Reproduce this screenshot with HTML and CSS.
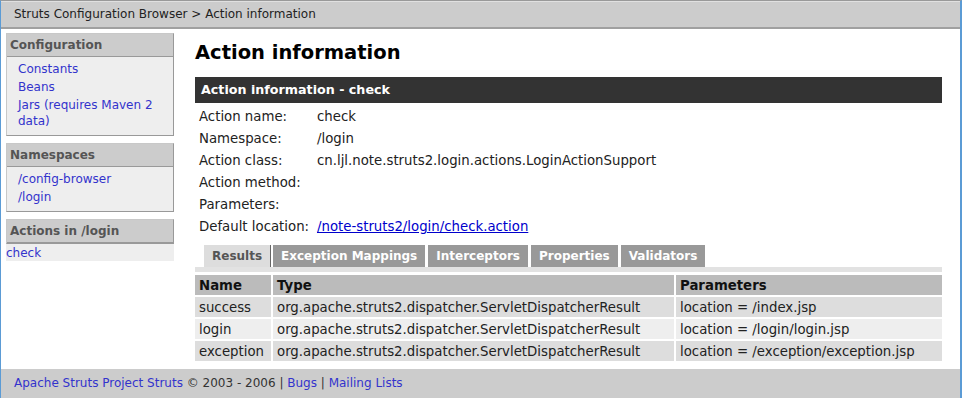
FILE: index.html
```html
<!DOCTYPE html>
<html lang="en">
<head>
    <meta charset="UTF-8">
    <title>Action information</title>
    <link rel="stylesheet" href="styles.css">
</head>
<body>
    <div class="page">
        <div class="header">Struts Configuration Browser &gt; Action information</div>

        <div class="layout">
            <div class="sidebar">
                <div class="nav-box">
                    <div class="nav-title">Configuration</div>
                    <ul class="nav-list">
                        <li><a href="#">Constants</a></li>
                        <li><a href="#">Beans</a></li>
                        <li><a href="#">Jars (requires Maven 2 data)</a></li>
                    </ul>
                </div>
                <div class="nav-box">
                    <div class="nav-title">Namespaces</div>
                    <ul class="nav-list">
                        <li><a href="#">/config-browser</a></li>
                        <li><a href="#">/login</a></li>
                    </ul>
                </div>
                <div class="nav-box actions">
                    <div class="nav-title">Actions in /login</div>
                </div>
                <div class="action-item"><a href="#">check</a></div>
            </div>

            <div class="main">
                <h1>Action information</h1>
                <div class="section-bar">Action information - check</div>
                <table class="info">
                    <tr><td class="label">Action name:</td><td>check</td></tr>
                    <tr><td class="label">Namespace:</td><td>/login</td></tr>
                    <tr><td class="label">Action class:</td><td>cn.ljl.note.struts2.login.actions.LoginActionSupport</td></tr>
                    <tr><td class="label">Action method:</td><td></td></tr>
                    <tr><td class="label">Parameters:</td><td></td></tr>
                    <tr><td class="label">Default location:</td><td><a class="plain-link" href="#">/note-struts2/login/check.action</a></td></tr>
                </table>

                <div class="tabs">
                    <span class="tab active">Results</span>
                    <span class="tab">Exception Mappings</span>
                    <span class="tab">Interceptors</span>
                    <span class="tab">Properties</span>
                    <span class="tab">Validators</span>
                </div>
                <div class="tab-panel">
                    <table class="results">
                        <tr><th class="col-name">Name</th><th class="col-type">Type</th><th>Parameters</th></tr>
                        <tr class="odd"><td>success</td><td>org.apache.struts2.dispatcher.ServletDispatcherResult</td><td>location = /index.jsp</td></tr>
                        <tr class="even"><td>login</td><td>org.apache.struts2.dispatcher.ServletDispatcherResult</td><td>location = /login/login.jsp</td></tr>
                        <tr class="odd"><td>exception</td><td>org.apache.struts2.dispatcher.ServletDispatcherResult</td><td>location = /exception/exception.jsp</td></tr>
                    </table>
                </div>
            </div>
        </div>

        <div class="footer">
            <a href="#">Apache Struts Project Struts</a> &copy; 2003 - 2006 | <a href="#">Bugs</a> | <a href="#">Mailing Lists</a>
        </div>
    </div>
</body>
</html>
```

FILE: styles.css
```css
html, body {
    margin: 0;
    padding: 0;
    height: 100%;
}
body {
    font-family: "DejaVu Sans", Verdana, sans-serif;
    font-size: 12px;
    color: #222;
    background: #fff;
}
a {
    color: #3333cc;
    text-decoration: none;
}
.page {
    box-sizing: border-box;
    height: 398px;
    border-left: 1px solid #5b9bd5;
    border-right: 2px solid #5b9bd5;
    border-top: 1px solid #999;
    display: flex;
    flex-direction: column;
}
.header {
    background: #cccccc;
    border-top: 1px solid #e0e0e0;
    border-bottom: 2px solid #a0a0a0;
    height: 25px;
    line-height: 25px;
    padding-left: 13px;
    color: #222;
}
.layout {
    display: flex;
    flex: 1;
    padding-top: 4px;
}
.sidebar {
    width: 168px;
    margin-left: 5px;
    flex-shrink: 0;
}
.nav-box {
    background: #eeeeee;
    border: 1px solid #c8c8c8;
    border-right-color: #999;
    border-bottom-color: #999;
    margin-bottom: 7px;
}
.nav-title {
    background: #cccccc;
    border-bottom: 1px solid #999;
    color: #555;
    font-weight: bold;
    height: 22px;
    line-height: 22px;
    padding-left: 3px;
}
.nav-list {
    list-style: none;
    margin: 0;
    padding: 4px 8px 6px 11px;
}
.nav-list li {
    line-height: 16px;
    margin-bottom: 2px;
}
.nav-list li:last-child {
    margin-bottom: 0;
}
.nav-box.actions {
    margin-bottom: 0;
}
.action-item {
    background: #eeeeee;
    line-height: 16px;
    padding-top: 1px;
}
.main {
    flex: 1;
    padding-left: 21px;
    padding-right: 18px;
    font-size: 13.3px;
}
h1 {
    font-size: 19.5px;
    margin: 7px 0 11px 0;
    color: #000;
    line-height: 26px;
}
.section-bar {
    background: #333333;
    color: #fff;
    font-weight: bold;
    font-size: 12.7px;
    height: 26px;
    line-height: 26px;
    padding-left: 6px;
}
.info {
    border-collapse: collapse;
    margin-top: 2px;
}
.info td {
    height: 22px;
    padding: 0 0 0 4px;
    vertical-align: middle;
}
.info td.label {
    width: 114px;
}
.plain-link {
    color: #0000cc;
    text-decoration: underline;
}
.tabs {
    display: flex;
    gap: 3px;
    margin-top: 8px;
    padding-left: 9px;
    font-size: 12px;
}
.tab {
    background: #999999;
    color: #fff;
    font-weight: bold;
    height: 22px;
    line-height: 22px;
    padding: 0 8px;
}
.tab.active {
    background: #dddddd;
    color: #555;
    border-right: 1px solid #666;
    margin-right: -1px;
}
.tab-panel {
    border-top: 5px solid #e2e2e2;
    padding-top: 1px;
}
.results {
    border-collapse: separate;
    border-spacing: 2px;
    margin: 0 -2px;
    width: calc(100% + 4px);
}
.results th, .results td {
    height: 20px;
    padding: 0 4px;
    text-align: left;
}
.results th {
    background: #bbbbbb;
    color: #111;
    font-weight: bold;
}
.col-name {
    width: 68px;
}
.col-type {
    width: 393px;
}
.results tr.odd td {
    background: #dddddd;
}
.results tr.even td {
    background: #eeeeee;
}
.footer {
    background: #cccccc;
    height: 29px;
    line-height: 29px;
    padding-left: 13px;
    color: #333;
}
```
